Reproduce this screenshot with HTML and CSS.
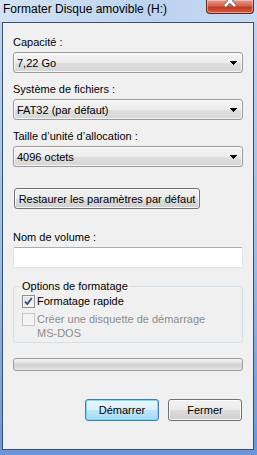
FILE: index.html
```html
<!DOCTYPE html>
<html lang="fr">
<head>
    <meta charset="UTF-8">
    <meta name="viewport" content="width=device-width, initial-scale=1.0">
    <title>Formater Disque amovible (H:)</title>
    <link rel="stylesheet" href="styles.css">
</head>
<body>
    <div class="window">
        <div class="titlebar">
            <span class="title">Formater Disque amovible (H:)</span>
            <div class="close-btn">
                <svg width="48" height="14" viewBox="0 0 48 14">
                    <path d="M17 -3 L22 2 L27 -3 M17 7 L22 2 L27 7" transform="translate(2 0)" stroke="#5a5a5a" stroke-width="4.2" fill="none"/>
                    <path d="M17 -3 L22 2 L27 -3 M17 7 L22 2 L27 7" transform="translate(2 0)" stroke="#ffffff" stroke-width="2.6" fill="none"/>
                </svg>
            </div>
        </div>

        <div class="client">
            <div class="label">Capacité :</div>
            <div class="combo">
                <span>7,22 Go</span>
                <svg class="arrow" width="7" height="4" viewBox="0 0 7 4"><path d="M0 0h7v1h-1v1h-1v1h-1v1h-1v-1h-1v-1h-1v-1h-1z"/></svg>
            </div>

            <div class="label">Système de fichiers :</div>
            <div class="combo">
                <span>FAT32 (par défaut)</span>
                <svg class="arrow" width="7" height="4" viewBox="0 0 7 4"><path d="M0 0h7v1h-1v1h-1v1h-1v1h-1v-1h-1v-1h-1v-1h-1z"/></svg>
            </div>

            <div class="label">Taille d’unité d’allocation :</div>
            <div class="combo">
                <span>4096 octets</span>
                <svg class="arrow" width="7" height="4" viewBox="0 0 7 4"><path d="M0 0h7v1h-1v1h-1v1h-1v1h-1v-1h-1v-1h-1v-1h-1z"/></svg>
            </div>

            <button class="btn restore-btn">Restaurer les paramètres par défaut</button>

            <div class="label volume-label">Nom de volume :</div>
            <div class="textbox"></div>

            <fieldset class="group">
                <legend>Options de formatage</legend>
                <div class="check">
                    <span class="box">
                        <svg width="11" height="11" viewBox="0 0 11 11"><path d="M2 5.5 L4.3 8 L8.8 2" stroke="#2f4a8a" stroke-width="1.8" fill="none"/></svg>
                    </span>
                    <span>Formatage rapide</span>
                </div>
                <div class="check disabled">
                    <span class="box"></span>
                    <span>Créer une disquette de démarrage<br>MS-DOS</span>
                </div>
            </fieldset>

            <div class="progress"></div>

            <div class="actions">
                <button class="btn default-btn">Démarrer</button>
                <button class="btn">Fermer</button>
            </div>
        </div>
    </div>
</body>
</html>
```

FILE: styles.css
```css
:root {
    --face: #f0f0f0;
    --text: #000000;
    --gray-text: #8c8c8c;
    --frame-border: #3d4e68;
}

* {
    margin: 0;
    padding: 0;
    box-sizing: border-box;
}

body {
    font-family: "Liberation Sans", Arial, sans-serif;
    font-size: 11px;
    color: var(--text);
    background: #6d98d8;
}

.window {
    width: 257px;
    height: 455px;
    overflow: hidden;
    background: linear-gradient(to bottom, #c8dbf1 0, #b4cdec 60px, #9dbde6 250px, #6b97d9 455px);
}

/* Barre de titre */
.titlebar {
    height: 22px;
    display: flex;
    justify-content: space-between;
    align-items: flex-start;
    background: linear-gradient(to right, #d3e3f5, #bcd2ee 60%, #c6daf2);
}

.title {
    font-size: 12px;
    line-height: 15px;
    padding: 2px 0 0 3px;
    color: #000;
}

.close-btn {
    width: 48px;
    height: 14px;
    margin-right: 3px;
    border: 1px solid #5b2a26;
    border-top: none;
    border-radius: 0 0 4px 4px;
    background: linear-gradient(to bottom, #e59a8f 0, #d2644f 45%, #c13a22 55%, #d65b3c 100%);
    box-shadow: inset 0 0 0 1px rgba(255, 220, 210, 0.5);
    overflow: hidden;
}

.close-btn svg {
    display: block;
    margin: -1px 0 0 -1px;
}

/* Zone client */
.client {
    width: 252px;
    height: 428px;
    margin-left: 2px;
    border: 1px solid var(--frame-border);
    background: var(--face);
    padding: 12px 10px 0 10px;
    display: flex;
    flex-direction: column;
}

.label {
    line-height: 14px;
    height: 14px;
    margin-bottom: 3px;
    white-space: nowrap;
}

.combo {
    height: 21px;
    border: 1px solid #9a9a9a;
    border-radius: 3px;
    background: linear-gradient(to bottom, #f4f4f4 0, #ececec 50%, #dfdfdf 51%, #d6d6d6 100%);
    box-shadow: inset 0 0 0 1px rgba(255, 255, 255, 0.7);
    display: flex;
    align-items: center;
    justify-content: space-between;
    padding: 0 5px 0 3px;
    margin-bottom: 9px;
    line-height: 14px;
}

.arrow {
    display: block;
    fill: #000;
}

.btn {
    font-family: inherit;
    font-size: 11px;
    color: #000;
    height: 21px;
    border: 1px solid #707070;
    border-radius: 3px;
    background: linear-gradient(to bottom, #f2f2f2 0, #ebebeb 50%, #dddddd 51%, #cfcfcf 100%);
    box-shadow: inset 0 0 0 1px rgba(255, 255, 255, 0.8);
    line-height: 14px;
}

.restore-btn {
    align-self: flex-start;
    width: 186px;
    margin: 12px 0 0 1px;
}

.volume-label {
    margin-top: 21px;
}

.textbox {
    height: 21px;
    background: #fff;
    border: 1px solid #e2e3ea;
    border-top-color: #abadb3;
    border-radius: 2px;
}

/* Options */
.group {
    margin-top: 11px;
    border: 1px solid #d5dfe5;
    border-radius: 3px;
    padding: 1px 8px 2px 8px;
    display: flex;
    flex-direction: column;
    gap: 4px;
}

.group legend {
    line-height: 14px;
    padding: 0 1px;
    margin-left: -1px;
}

.check {
    display: flex;
    align-items: flex-start;
    gap: 2px;
    line-height: 14px;
}

.check .box {
    width: 13px;
    height: 13px;
    flex: none;
    margin-top: 1px;
    border: 1px solid #8e8f8f;
    background: linear-gradient(135deg, #d9dcdf, #fafafa);
    box-shadow: inset 0 0 0 1px #f4f4f4;
}

.check .box svg {
    display: block;
}

.check.disabled {
    color: var(--gray-text);
}

.check.disabled .box {
    border-color: #c7c7c7;
    background: #f4f4f4;
    box-shadow: none;
}

.progress {
    margin-top: 15px;
    height: 13px;
    border: 1px solid #9c9c9c;
    border-radius: 3px;
    background: linear-gradient(to bottom, #f3f3f3 0, #e6e6e6 30%, #d2d2d2 50%, #d8d8d8 75%, #e4e4e4 100%);
}

.actions {
    margin-top: 28px;
    display: flex;
    justify-content: flex-end;
    gap: 9px;
    padding-right: 1px;
}

.actions .btn {
    width: 74px;
    height: 22px;
}

.default-btn {
    border-color: #3c7fb1;
    background: linear-gradient(to bottom, #eaf6fd 0, #d9f0fc 50%, #bee6fd 51%, #a7d9f5 100%);
    box-shadow: inset 0 0 0 1px #7ddcf8;
}
```
